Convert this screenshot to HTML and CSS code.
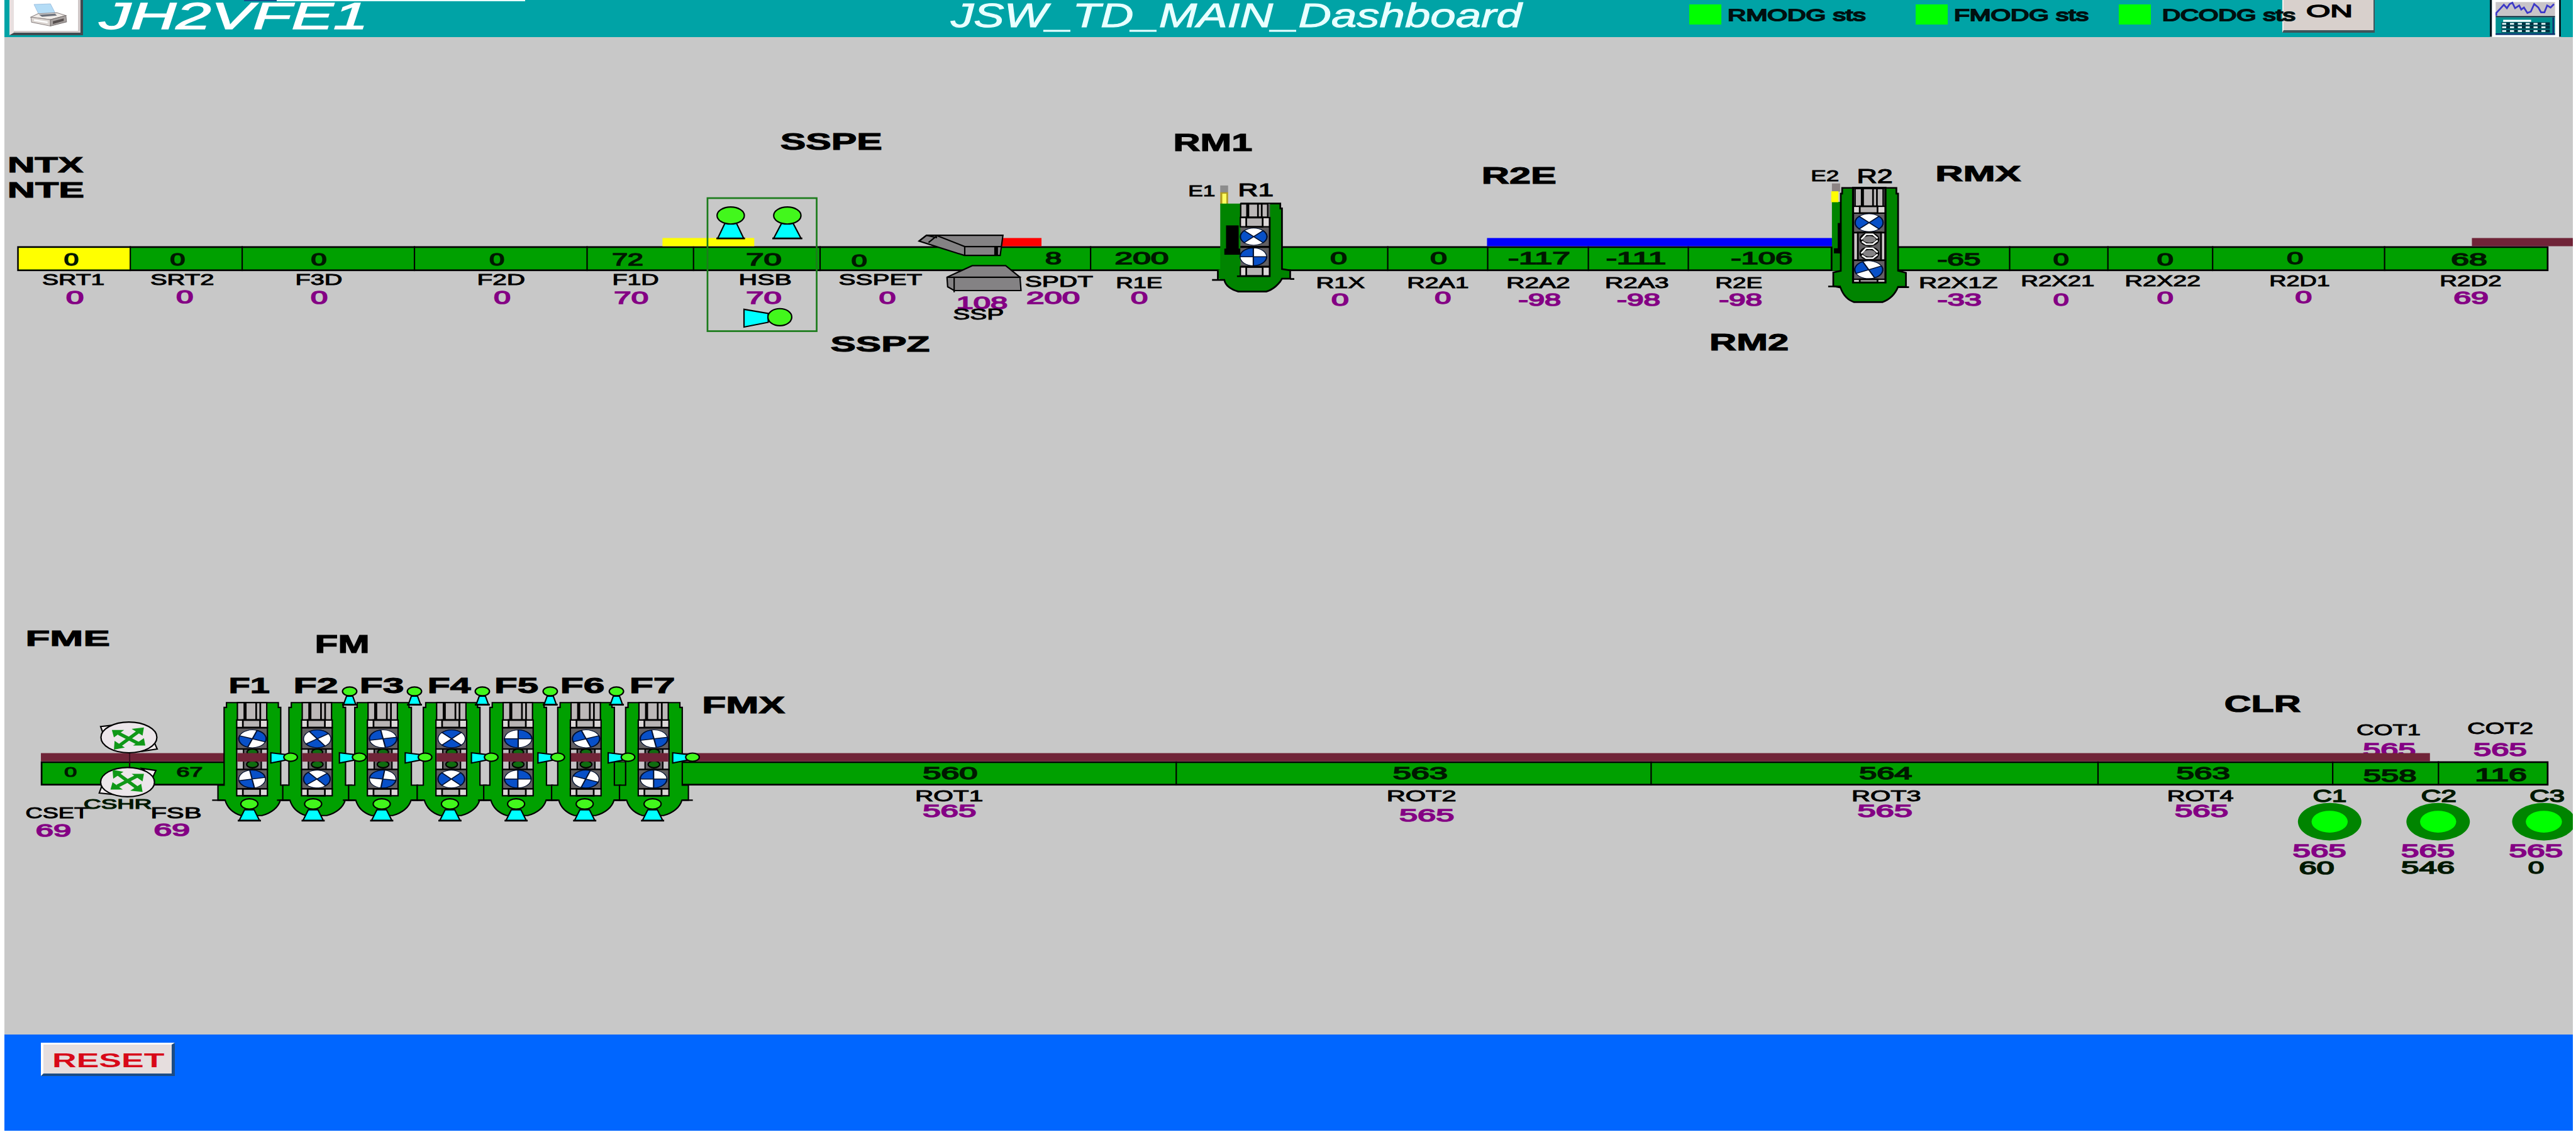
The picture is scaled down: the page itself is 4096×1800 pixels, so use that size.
FILE: index.html
```html
<!DOCTYPE html>
<html lang="en">
<head>
<meta charset="utf-8">
<title>JSW_TD_MAIN_Dashboard</title>
<link rel="stylesheet" href="styles.css">
</head>
<body>
<div class="screen">
  <header class="topbar">
    <button class="print-button" aria-label="Print">
      <svg viewBox="27 0 215 103" preserveAspectRatio="none">
        <path d="M92 14L145 12L162 44L108 46Z" fill="#b4dcf6" stroke="#8fb4d8" stroke-width="1.5"/>
        <path d="M82 54L105 43L166 40L195 49L145 62Z" fill="#f1ece8" stroke="#8c8484" stroke-width="2"/>
        <path d="M108 46L160 43L166 49L118 53Z" fill="#6e727c"/>
        <path d="M82 54L145 62V82L84 70Z" fill="#dcd6d2" stroke="#8c8484" stroke-width="2"/>
        <path d="M145 62L195 49L197 69L145 82Z" fill="#a8a2a0" stroke="#77706f" stroke-width="2"/>
        <path d="M153 67L188 58V66L153 76Z" fill="#57504f"/>
        <path d="M92 61L136 68V73L92 66Z" fill="#fff"/>
      </svg>
    </button>
    <div class="station fit"><span>JH2VFE1</span></div>
    <h1 class="title fit"><span>JSW_TD_MAIN_Dashboard</span></h1>
    <i class="lamp lamp-rm"></i><div class="status status-rm fit"><span>RMODG sts</span></div>
    <i class="lamp lamp-fm"></i><div class="status status-fm fit"><span>FMODG sts</span></div>
    <i class="lamp lamp-dc"></i><div class="status status-dc fit"><span>DCODG sts</span></div>
    <button class="on-button"><span class="on-label fit"><span>ON</span></span></button>
    <button class="trend-button" aria-label="Trend">
      <svg viewBox="7302 0 209 108" preserveAspectRatio="none">
        <rect x="7302" width="209" height="108" fill="#fff"/>
        <path d="M7305 0V108M7508 0V108" stroke="#001820" stroke-width="6"/>
        <rect x="7319" y="6" width="174" height="41" fill="#c8c4c8"/>
        <path d="M7321 46V38L7332 26L7343 14L7352 24L7360 12L7368 8L7376 24L7388 16L7394 28L7402 22L7412 38L7422 34L7432 12L7444 22L7452 36L7462 36L7470 16L7480 22L7490 12" fill="none" stroke="#3c38c8" stroke-width="5"/>
        <rect x="7319" y="47" width="174" height="4" fill="#001c30"/>
        <rect x="7319" y="51" width="174" height="51" fill="#009090"/>
        <path d="M7488 51V102M7319 100H7493" stroke="#103070" stroke-width="5"/>
        <rect x="7341" y="58" width="82" height="6" fill="#fff"/>
        <path d="M7336 70H7478M7336 80H7478M7336 91H7478" stroke="#003040" stroke-width="9"/>
        <path d="M7338 70H7476M7338 80H7476M7338 91H7476" stroke="#e8ffff" stroke-width="5" stroke-dasharray="12 11"/>
      </svg>
    </button>
  </header>
  <main class="mill">
    <svg id="line" viewBox="13 108 7528 2924" preserveAspectRatio="none"></svg>
  </main>
  <footer class="footer">
    <button class="reset-button"><span class="reset-label fit"><span>RESET</span></span></button>
  </footer>
</div>
<script src="line.js"></script>
</body>
</html>
```
FILE: styles.css
```css
* { box-sizing: border-box; }
body {
  margin: 0;
  background: #fff;
  font-family: "Liberation Sans", Arial, sans-serif;
}
button {
  padding: 0;
  border: 0;
  border-radius: 0;
  font: inherit;
  color: inherit;
}
.screen {
  width: 4096px;
  height: 1800px;
  padding: 0 5.5px 2.5px 7px;
  display: grid;
  grid-template-rows: 58.6px 1fr 152.9px;
  overflow: hidden;
}
.fit { white-space: nowrap; flex: none; text-align: left; }
.fit > span { display: inline-block; transform-origin: 0 50%; }

.topbar {
  display: flex;
  align-items: flex-start;
  background:
    linear-gradient(#14508c, #14508c) 381px 0 / 52px 2px no-repeat,
    linear-gradient(#e8ffff, #e8ffff) 433px 0 / 395px 2px no-repeat,
    #00a3a6;
}
.print-button {
  flex: none;
  width: 117px;
  height: 56px;
  margin-left: 7.6px;
  background: #fff;
  border-style: solid;
  border-color: #d8d0d0 #404a50 #404a50 #e8e0e0;
  border-width: 0 4px 4px 7px;
  box-shadow: inset -4px -3px 0 #d0c8c8;
}
.print-button svg { display: block; width: 106px; height: 52px; }
.station {
  width: 428px;
  margin-left: 26px;
  margin-top: 1px;
  font-size: 60px;
  line-height: 50px;
  font-style: italic;
  color: #fff;
  -webkit-text-stroke: 1.5px #fff;
}
.title {
  width: 908px;
  margin: 3px 0 0 926px;
  font-size: 53px;
  line-height: 44px;
  font-weight: 400;
  font-style: italic;
  color: #e8ffff;
  -webkit-text-stroke: 1px #e8ffff;
}
.lamp {
  flex: none;
  width: 51px;
  height: 31.5px;
  margin-top: 7px;
  background: #00ff00;
}
.lamp-rm { margin-left: 266px; }
.lamp-fm { margin-left: 79px; }
.lamp-dc { margin-left: 48px; }
.status {
  height: 30px;
  margin-top: 9px;
  font-size: 25px;
  line-height: 30px;
  color: #001010;
  -webkit-text-stroke: 1.8px #001010;
}
.status-rm { width: 220px; margin-left: 10px; }
.status-fm { width: 214px; margin-left: 10px; }
.status-dc { width: 212px; margin-left: 18px; position: relative; z-index: 1; }
.on-button {
  flex: none;
  width: 147.6px;
  height: 52px;
  margin-left: -21px;
  background: #d8d0cc;
  border-bottom: 4px solid #40545a;
  border-right: 2px solid #40545a;
  border-left: 2px solid #f4f0ee;
  display: flex;
  align-items: flex-start;
}
.on-label {
  width: 74px;
  margin: 1px 0 0 36px;
  font-size: 28px;
  line-height: 33px;
  color: #000;
  -webkit-text-stroke: 1.5px #000;
}
.trend-button {
  flex: none;
  width: 113.4px;
  height: 58.6px;
  margin-left: 182.5px;
}
.trend-button svg { display: block; width: 100%; height: 100%; }

.mill { background: #c8c8c8; min-height: 0; }
.mill svg { display: block; width: 100%; height: 100%; }
.mill text { font-size: 100px; font-family: "Liberation Sans", Arial, sans-serif; }
.name { fill: #000; stroke: #000; }
.value { fill: #001800; stroke: #001800; }
.set { fill: #840084; stroke: #840084; }
.head { fill: #000; stroke: #000; font-weight: 700; }

.footer {
  background: #0066ff;
  display: flex;
  align-items: flex-start;
  padding: 13.6px 0 0 57.5px;
}
.reset-button {
  width: 213px;
  height: 53px;
  background: #e6dede;
  border-style: solid;
  border-width: 3px 5px 4px 4px;
  border-color: #fff #1c4c84 #1c4c84 #fff;
  display: flex;
  align-items: flex-start;
}
.reset-label {
  width: 179px;
  margin: 7px 0 0 14px;
  font-size: 32px;
  line-height: 36px;
  font-weight: 700;
  color: #d80818;
}
```
FILE: line.js
```js
const svg = document.getElementById("line");
const NS = "http://www.w3.org/2000/svg";
const GREEN = "#00a000", DARK = "#008400", STRIP = "#702438";

function el(name, attrs, parent = svg) {
  const node = document.createElementNS(NS, name);
  for (const key in attrs) node.setAttribute(key, attrs[key]);
  parent.appendChild(node);
  return node;
}
function rect(x1, y1, x2, y2, fill, stroke, width) {
  return el("rect", { x: x1, y: y1, width: x2 - x1, height: y2 - y1, fill, stroke: stroke || "none", "stroke-width": width || 0 });
}
function path(d, fill, stroke = "#000", width = 4, parent = svg) {
  return el("path", { d, fill, stroke, "stroke-width": width }, parent);
}
function oval(cx, cy, rx, ry, fill, stroke = "#000", width = 4) {
  return el("ellipse", { cx, cy, rx, ry, fill, stroke, "stroke-width": stroke === "none" ? 0 : width });
}

// Wide lettering: the glyph box is stretched to the span left..right, top..baseline.
const WEIGHT = { head: 3, name: 4, value: 5.5, set: 5.5 };
const pen = document.createElement("canvas").getContext("2d");
function label(kind, text, left, right, top, base) {
  const w = WEIGHT[kind];
  pen.font = (kind === "head" ? "bold " : "") + '100px "Liberation Sans"';
  const m = pen.measureText(text);
  const sx = (right - left) / (m.actualBoundingBoxLeft + m.actualBoundingBoxRight + w);
  const sy = (base - top) / (69 + w);
  const x = left + (m.actualBoundingBoxLeft + w / 2) * sx;
  const y = base - w / 2 * sy;
  const node = el("text", {
    class: kind,
    "stroke-width": w,
    transform: `matrix(${sx.toFixed(4)} 0 0 ${sy.toFixed(4)} ${x.toFixed(1)} ${y.toFixed(1)})`
  });
  node.textContent = text;
}
function labels(kind, rows) { rows.forEach(r => label(kind, ...r)); }

function conveyor(x1, x2, y1, y2, dividers) {
  rect(x1 + 2, y1 + 2.5, x2 - 2, y2 - 2.5, GREEN, "#000", 5);
  dividers.forEach(x => path(`M${x} ${y1}V${y2}`, "none"));
}
function wheel(cx, cy, rx, ry, angle) {
  const g = el("g", { transform: `translate(${cx} ${cy}) scale(${rx} ${ry}) rotate(${angle})` });
  el("circle", { r: 1, fill: "#fff", stroke: "#001030", "stroke-width": 0.07 }, g);
  path("M0 0L1 0A1 1 0 0 1 0 1ZM0 0L-1 0A1 1 0 0 1 0 -1Z", "#0850c8", "#001030", 0.1, g);
}
function sprayDown(x, top, headR, headH, neckY, footY, neck, foot) {
  path(`M${x - neck} ${neckY}H${x + neck}L${x + foot} ${footY}H${x - foot}Z`, "#00ffff");
  path(`M${x - foot - 4} ${footY}H${x + foot + 4}`, "none", "#000", 5);
  oval(x, top + headH, headR, headH, "#42f71c");
}
function spraySide(x, y) {
  path(`M${x} ${y - 13}L${x + 42} ${y - 8}V${y + 9}L${x} ${y + 17}Z`, "#00ffff");
  oval(x + 58, y, 20, 12, "#42f71c");
}
function bars(x1, x2, y1, y2) {
  const w = x2 - x1;
  rect(x1, y1, x2, y2, "#bcb8b8", "#000", 4);
  path(`M${x1 + w * 0.26} ${y1}V${y2}`, "none", "#000", 9);
  path(`M${x1 + w * 0.64} ${y1}V${y2}M${x1 + w * 0.78} ${y1}V${y2}`, "none", "#000", 5);
}
function chock(x1, x2, y1, y2) {
  const w = x2 - x1;
  rect(x1, y1, x2, y2, "#ddd8d8", "#000", 4);
  rect(x1 + w * 0.2, y1, x2 - w * 0.24, y2, "#b8b4b4", "#000", 5);
}

function finishingStand(cx, upper, lower) {
  path(`M${cx - 76} 2059H${cx + 76}V2073H${cx + 83}V2301H${cx + 101}V2345H${cx + 82}C${cx + 76} 2366 ${cx + 56} 2383 ${cx + 28} 2390H${cx - 34}C${cx - 58} 2382 ${cx - 74} 2366 ${cx - 80} 2345H${cx - 101}V2301H${cx - 83}V2073H${cx - 76}Z`, GREEN);
  path(`M${cx - 118} 2345H${cx - 82}M${cx + 84} 2345H${cx + 114}`, "none");
  bars(cx - 44, cx + 42, 2059, 2110);
  chock(cx - 46, cx + 44, 2110, 2132);
  rect(cx - 46, 2133, cx + 44, 2195, "#625f62", "#000", 4);
  wheel(cx, 2165, 40, 26, upper);
  rect(cx - 46, 2195, cx + 44, 2255, "#c4c0c4", "#000", 4);
  rect(cx - 26, 2195, cx + 26, 2255, "#625f62", "#000", 4);
  oval(cx, 2204, 16, 9, "#106c10");
  oval(cx, 2240, 17, 10, "#106c10");
  rect(cx - 44, 2207, cx + 42, 2232, STRIP);
  rect(cx - 46, 2255, cx + 44, 2312, "#625f62", "#000", 4);
  wheel(cx - 1, 2283, 39, 26, lower);
  chock(cx - 46, cx + 44, 2312, 2332);
}

/* roughing line */
conveyor(51, 7470, 721, 794, [382, 710, 1215, 1721, 2033, 2404, 3197, 4068, 4361, 4656, 4949, 5891, 6179, 6486, 6990]);
rect(55, 726, 380, 789, "#ffff00");
rect(1942, 697, 2211, 721, "#ffff00");
rect(2934, 697, 3053, 721, "#ff0000");
rect(4359, 697, 5372, 721, "#0000ff");
rect(7246, 697, 7551, 721, STRIP);

rect(2074, 580, 2394, 970, "none", "#1c7c1c", 5);
sprayDown(2142, 606, 40, 25, 654, 698, 17, 38);
sprayDown(2308, 606, 40, 25, 654, 698, 17, 40);
path("M2181 906L2252 918V944L2181 958Z", "#00ffff");
oval(2286, 929, 35, 25, "#42f71c");

/* slab sizing press */
path("M2716 689H2940L2932 748H2827L2694 706Z", "#848284");
path("M2747 690L2828 722H2934M2828 722V748M2716 689L2694 706M2747 690L2722 710M2716 689L2747 696", "none");
path("M2920 722V748", "none", "#000", 11);
path("M2850 778H2948L2990 812L2993 851H2797L2778 840L2776 812Z", "#848284");
path("M2776 812H2993M2797 812V856", "none");

/* R1 with edger E1 */
rect(3577, 543, 3600, 564, "#8c8c8c");
rect(3577, 563, 3600, 599, "#b09c20");
rect(3583, 567, 3595, 599, "#ffff60");
path("M3577 596H3753V610H3758V788L3782 792V816H3758C3750 832 3732 848 3712 854H3630C3606 847 3592 834 3589 820L3570 816V792L3577 788Z", DARK, "none");
path("M3636 596H3753V610H3758V788L3782 792V816H3758C3750 832 3732 848 3712 854H3630C3606 847 3592 834 3589 820H3553M3570 818V792M3782 817H3794", "none", "#000", 5);
rect(3594, 660, 3631, 730, "#000");
rect(3589, 728, 3636, 746, "#000");
rect(3636, 597, 3723, 809, "#625f62");
bars(3637, 3716, 597, 636);
chock(3636, 3722, 637, 664);
wheel(3675, 693, 39, 25, -45);
wheel(3674, 752, 39, 26, 0);
path("M3636 723H3722M3636 781H3722", "none", "#000", 6);
chock(3636, 3722, 782, 808);
path("M3626 809H3722V636", "none", "#000", 5);

/* R2 with edger E2 */
rect(5370, 591, 5398, 793, DARK);
rect(5370, 537, 5394, 561, "#8c8484");
rect(5368, 560, 5389, 592, "#ffff00");
path("M5400 550H5559V567H5564V793L5587 799V840H5564C5556 860 5540 877 5518 885H5435C5414 878 5402 862 5395 842L5374 838V798L5396 793V567H5400Z", DARK, "#000", 5);
path("M5359 839H5396M5564 841H5596M5369 722V793", "none", "#000", 5);
rect(5387, 653, 5398, 742, "#000");
rect(5376, 727, 5398, 742, "#000");
rect(5432, 550, 5527, 827, "#625f62", "#000", 6);
bars(5438, 5520, 552, 604);
chock(5433, 5526, 604, 624);
wheel(5479, 652, 41, 26, -45);
rect(5433, 681, 5526, 762, "#cac6c6", "#000", 5);
rect(5446, 681, 5514, 762, "#625f62", "#000", 5);
[701, 742].forEach(y => {
  oval(5480, y, 24, 15, "#848284", "#000", 10);
  path(`M5456 ${y}L5470 ${y - 15}H5490L5504 ${y - 3}M5504 ${y + 3}L5490 ${y + 14}H5470L5458 ${y + 6}`, "none", "#fff", 5);
});
wheel(5478, 790, 41, 26, -25);
chock(5433, 5526, 818, 827);

/* finishing line */
conveyor(120, 7470, 2231, 2302, [3448, 4840, 6150, 6838, 7148]);
path("M380 2207V2252", "none", "#200810");
labels("set", [["565", 6928, 7081, 2176, 2216], ["565", 7252, 7406, 2176, 2216]]);
rect(120, 2207, 662, 2231, STRIP);
rect(2000, 2207, 7123, 2231, STRIP);
path("M380 2207V2232", "none", "#401020");
rect(1800, 2234, 1836, 2300, GREEN);
/* clear gaps between the stands F1..F6 */
[[822, 848], [1013, 1041], [1205, 1242], [1406, 1437], [1601, 1636]].forEach(([a, b]) => rect(a, 2229, b, 2304, "#c8c8c8"));
[[740, -70, 80], [930, 55, -40], [1123, -10, 8], [1324, 45, -45], [1519, 90, 90], [1718, -20, 20], [1917, -10, 0]]
  .forEach(s => finishingStand(...s));
labels("head", [
  ["F1", 675, 790, 1985, 2032], ["F2", 865, 989, 1985, 2032], ["F3", 1059, 1182, 1985, 2032], ["F4", 1258, 1382, 1985, 2032],
  ["F5", 1454, 1577, 1985, 2032], ["F6", 1647, 1770, 1985, 2032], ["F7", 1850, 1977, 1985, 2032]
]);
[1025, 1215, 1414, 1613, 1807].forEach(x => sprayDown(x, 2013, 21, 13, 2040, 2065, 9, 18));
[794, 995, 1188, 1382, 1577, 1783, 1972].forEach(x => spraySide(x, 2219));
[731, 918, 1119, 1319, 1513, 1714, 1913].forEach(x => sprayDown(x, 2341, 25, 15, 2373, 2405, 14, 30));

/* crop shear drums */
function drum(cx, cy, rx, ry, flip) {
  const g = el("g", { transform: `translate(${cx} ${cy}) scale(1 ${flip})` });
  path("M-83 -32L-45 -36L-75 -10ZM83 34L42 40L74 14Z", "#f4eef0", "#000", 4, g);
  el("ellipse", { rx, ry, fill: "#ece6ea", stroke: "#000", "stroke-width": 4 }, g);
  path("M-30 -12L30 19M-28 24L28 -17", "none", "#109818", 10, g);
  path("M-50 -22L-14 -22L-44 0ZM48 24L12 24L44 2ZM-44 36L-42 10L-12 30ZM44 -29L8 -25L40 -5Z", "#109818", "none", 0, g);
}
drum(378, 2161, 82, 45, 1);
drum(374, 2292, 79, 43, -1);

/* coilers */
[6829, 7147, 7457].forEach(x => {
  oval(x, 2408, 93, 55, "#008400", "none");
  oval(x, 2408, 53, 32, "#00ff00", "none");
});

labels("head", [
  ["NTX", 27, 245, 458, 505], ["NTE", 27, 245, 533, 580], ["SSPE", 2288, 2584, 391, 439], ["SSPZ", 2435, 2725, 984, 1031],
  ["RM1", 3444, 3670, 391, 443], ["R2E", 4348, 4560, 491, 539], ["RM2", 5016, 5241, 977, 1027], ["RMX", 5678, 5925, 485, 532],
  ["FME", 80, 320, 1847, 1894], ["FM", 928, 1078, 1861, 1914], ["FMX", 2063, 2302, 2042, 2090], ["CLR", 6523, 6745, 2039, 2087]
]);
labels("name", [
  ["SRT1", 125, 305, 802, 835], ["SRT2", 442, 626, 802, 835], ["F3D", 870, 1002, 802, 835], ["F2D", 1403, 1538, 802, 835],
  ["F1D", 1799, 1930, 802, 835], ["HSB", 2170, 2319, 802, 835], ["SSPET", 2460, 2703, 802, 835], ["SPDT", 3006, 3204, 808, 841],
  ["R1E", 3275, 3406, 812, 845], ["R1X", 3862, 4001, 812, 845], ["R2A1", 4129, 4304, 812, 845], ["R2A2", 4420, 4601, 812, 845],
  ["R2A3", 4709, 4891, 812, 845], ["R2E", 5032, 5165, 812, 845], ["R2X1Z", 5629, 5855, 812, 845], ["R2X21", 5928, 6138, 808, 839],
  ["R2X22", 6233, 6449, 808, 839], ["R2D1", 6656, 6828, 808, 839], ["R2D2", 7156, 7331, 808, 839],
  ["E1", 3487, 3561, 543, 576], ["R1", 3634, 3731, 537, 576], ["E2", 5312, 5389, 499, 532], ["R2", 5448, 5546, 495, 536],
  ["CSET", 77, 260, 2366, 2399], ["FSB", 446, 589, 2366, 2399], ["ROT1", 2687, 2880, 2315, 2348], ["ROT2", 4069, 4267, 2315, 2348],
  ["ROT3", 5432, 5630, 2315, 2348], ["ROT4", 6357, 6547, 2315, 2348], ["COT1", 6910, 7094, 2122, 2155], ["COT2", 7235, 7424, 2118, 2152]
]);
labels("value", [
  ["0", 188, 230, 740, 779], ["0", 499, 542, 740, 779], ["0", 912, 957, 740, 779], ["0", 1435, 1478, 740, 779],
  ["72", 1796, 1884, 740, 778], ["70", 2189, 2290, 740, 778], ["0", 2496, 2541, 743, 782], ["8", 3065, 3111, 737, 775],
  ["200", 3270, 3425, 737, 775], ["0", 3900, 3948, 737, 775], ["0", 4193, 4241, 737, 775], ["-117", 4422, 4601, 737, 775],
  ["-111", 4709, 4882, 737, 775], ["-106", 5075, 5254, 737, 775], ["-65", 5680, 5805, 740, 779], ["0", 6019, 6064, 740, 779],
  ["0", 6323, 6370, 740, 779], ["0", 6704, 6751, 737, 775], ["68", 7187, 7290, 740, 779],
  ["0", 189, 225, 2247, 2278], ["67", 519, 593, 2247, 2278], ["560", 2706, 2865, 2247, 2285], ["563", 4084, 4243, 2247, 2285],
  ["564", 5451, 5605, 2247, 2285], ["563", 6381, 6536, 2247, 2285], ["558", 6929, 7083, 2253, 2292], ["116", 7259, 7406, 2250, 2290],
  ["CSHR", 247, 444, 2341, 2372], ["C1", 6782, 6877, 2312, 2351], ["C2", 7099, 7199, 2312, 2351], ["C3", 7417, 7517, 2312, 2351],
  ["60", 6741, 6842, 2524, 2564], ["546", 7040, 7195, 2522, 2561], ["0", 7411, 7457, 2522, 2561]
]);
labels("set", [
  ["0", 194, 245, 852, 892], ["0", 517, 566, 850, 890], ["0", 911, 960, 852, 892], ["0", 1448, 1496, 852, 892],
  ["70", 1802, 1900, 853, 892], ["70", 2189, 2290, 853, 892], ["0", 2577, 2625, 853, 892], ["108", 2807, 2953, 867, 906],
  ["200", 3011, 3165, 853, 892], ["0", 3315, 3364, 853, 892], ["0", 3903, 3953, 857, 896], ["0", 4206, 4253, 853, 892],
  ["-98", 4452, 4575, 857, 896], ["-98", 4741, 4866, 857, 896], ["-98", 5040, 5165, 857, 896], ["-33", 5680, 5808, 857, 896],
  ["0", 6019, 6064, 857, 896], ["0", 6323, 6370, 853, 892], ["0", 6728, 6776, 850, 889], ["69", 7194, 7293, 853, 892],
  ["69", 107, 207, 2414, 2453], ["69", 453, 555, 2411, 2450], ["565", 2706, 2861, 2356, 2395], ["565", 4103, 4262, 2369, 2408],
  ["565", 5446, 5605, 2356, 2395], ["565", 6376, 6531, 2356, 2395], ["565", 6722, 6877, 2472, 2513], ["565", 7040, 7195, 2472, 2513],
  ["565", 7356, 7512, 2472, 2513]
]);
labels("name", [["SSP", 2795, 2941, 906, 937]]);

document.querySelectorAll(".fit").forEach(box => {
  const text = box.firstElementChild;
  text.style.transform = `scaleX(${box.clientWidth / text.offsetWidth})`;
});
```
